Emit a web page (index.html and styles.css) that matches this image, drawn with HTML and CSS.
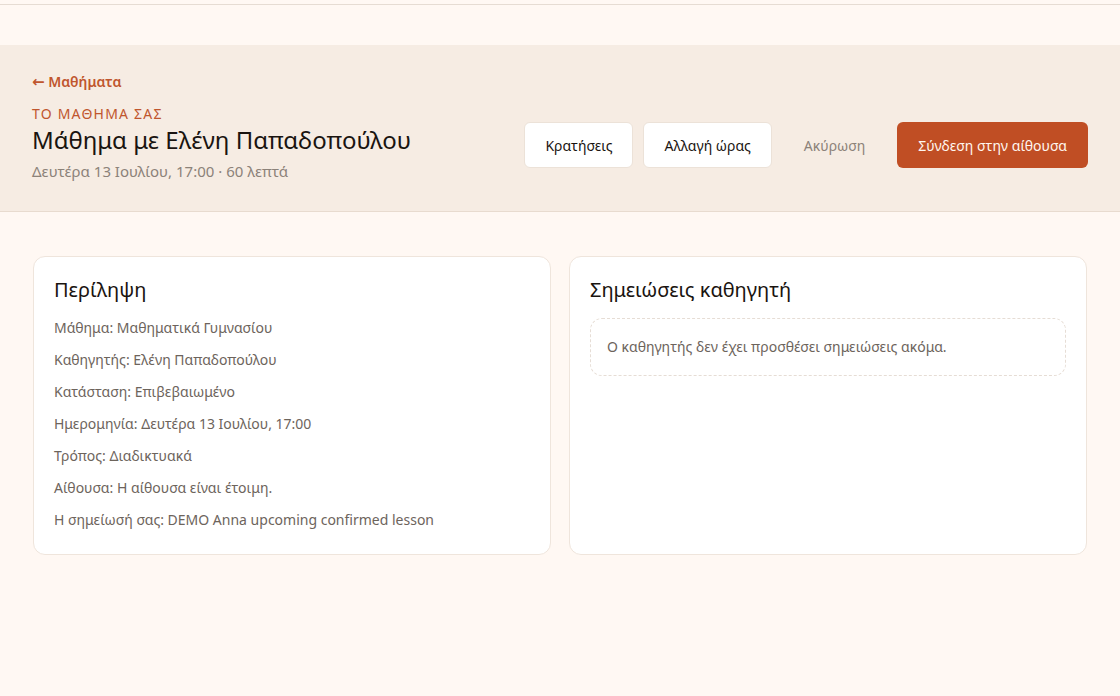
FILE: index.html
```html
<!DOCTYPE html>
<html lang="el">
<head>
<meta charset="utf-8">
<title>Μάθημα</title>
<link rel="stylesheet" href="styles.css">
</head>
<body>
<div class="topbar"></div>
<div class="spacer"></div>
<header class="hero">
  <a class="back" href="#">← Μαθήματα</a>
  <div class="hero-row">
    <div class="hero-text">
      <div class="eyebrow">ΤΟ ΜΑΘΗΜΑ ΣΑΣ</div>
      <h1 class="title">Μάθημα με Ελένη Παπαδοπούλου</h1>
      <div class="subtitle">Δευτέρα 13 Ιουλίου, 17:00 · 60 λεπτά</div>
    </div>
    <div class="actions">
      <button class="btn btn-outline">Κρατήσεις</button>
      <button class="btn btn-outline">Αλλαγή ώρας</button>
      <button class="btn btn-ghost">Ακύρωση</button>
      <button class="btn btn-primary">Σύνδεση στην αίθουσα</button>
    </div>
  </div>
</header>
<main class="content">
  <section class="card">
    <h2 class="card-title">Περίληψη</h2>
    <ul class="facts">
      <li>Μάθημα: Μαθηματικά Γυμνασίου</li>
      <li>Καθηγητής: Ελένη Παπαδοπούλου</li>
      <li>Κατάσταση: Επιβεβαιωμένο</li>
      <li>Ημερομηνία: Δευτέρα 13 Ιουλίου, 17:00</li>
      <li>Τρόπος: Διαδικτυακά</li>
      <li>Αίθουσα: Η αίθουσα είναι έτοιμη.</li>
      <li>Η σημείωσή σας: DEMO Anna upcoming confirmed lesson</li>
    </ul>
  </section>
  <section class="card">
    <h2 class="card-title">Σημειώσεις καθηγητή</h2>
    <div class="empty">Ο καθηγητής δεν έχει προσθέσει σημειώσεις ακόμα.</div>
  </section>
</main>
</body>
</html>
```
FILE: styles.css
```css
* { box-sizing: border-box; }
html, body { margin: 0; padding: 0; }
body {
  background: #fff8f3;
  font-family: "Noto Sans", "DejaVu Sans", sans-serif;
  color: #1c1712;
}
.topbar {
  height: 5px;
  border-bottom: 1px solid #e6dcd3;
}
.spacer { height: 40px; }
.hero {
  background: #f6ece3;
  border-bottom: 1px solid #e8dbcf;
  padding: 25px 32px 29px;
}
.back {
  display: inline-block;
  color: #c0562e;
  font-size: 14px;
  font-weight: 600;
  text-decoration: none;
  line-height: 20px;
}
.back::first-letter { font-size: 15px; }
.hero-row {
  display: flex;
  align-items: center;
  justify-content: space-between;
  margin-top: 14px;
}
.hero-text { display: flex; flex-direction: column; }
.eyebrow {
  color: #c0562e;
  font-size: 14px;
  letter-spacing: 1.2px;
  line-height: 16px;
}
.title {
  margin: 2px 0 0;
  font-size: 24px;
  font-weight: 400;
  line-height: 32px;
  color: #1a1410;
}
.subtitle {
  margin-top: 4px;
  font-size: 15px;
  color: #8c8279;
  line-height: 22px;
}
.actions {
  display: flex;
  align-items: center;
  gap: 10px;
  margin-top: 2px;
}
.btn {
  font-family: inherit;
  font-size: 14px;
  height: 46px;
  border-radius: 6px;
  padding: 0 20px;
  cursor: pointer;
}
.btn-outline {
  background: #fff;
  border: 1px solid #ece2d8;
  color: #1a1410;
}
.btn-ghost {
  background: transparent;
  border: none;
  color: #8c8279;
  padding: 0 22px;
}
.btn-primary {
  background: #c04e24;
  color: #fff6ef;
  border: none;
  padding: 0 21px;
}
.content {
  display: grid;
  grid-template-columns: 1fr 1fr;
  gap: 18px;
  padding: 44px 33px 0 33px;
}
.card {
  background: #fff;
  border: 1px solid #efe5dc;
  border-radius: 12px;
  padding: 19px 20px 8px;
  min-height: 299px;
}
.card-title {
  margin: 0 0 14px;
  font-size: 20px;
  font-weight: 400;
  line-height: 28px;
  color: #1a1410;
}
.facts {
  list-style: none;
  margin: 2px 0 0;
  padding: 0;
  font-size: 14px;
  color: #6d645c;
}
.facts li { line-height: 20px; margin-bottom: 12px; }
.empty {
  border: 1px dashed #e6ddd5;
  border-radius: 12px;
  padding: 18px 16px;
  font-size: 14px;
  color: #6d645c;
  line-height: 20px;
}
```
